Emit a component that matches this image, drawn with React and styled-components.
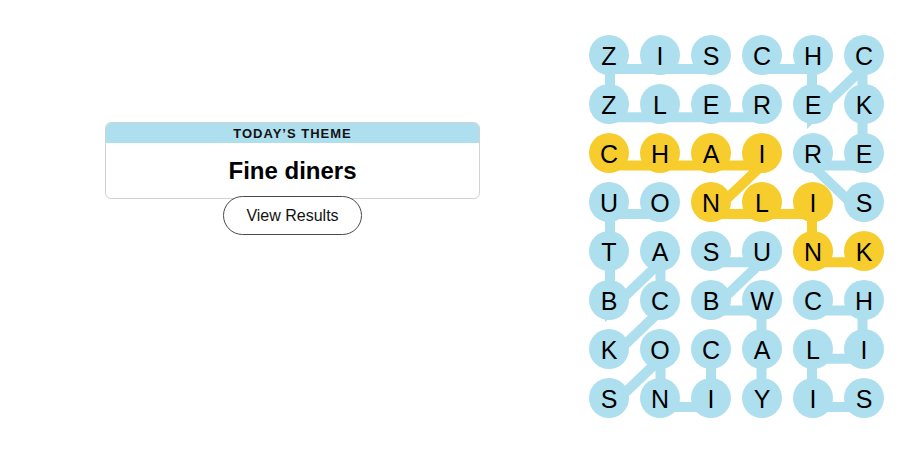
import React from "react";
import styled, { createGlobalStyle } from "styled-components";

const GlobalStyle = createGlobalStyle`
  html, body {
    margin: 0;
    padding: 0;
    background: #ffffff;
  }
  body {
    font-family: "Liberation Sans", Arial, sans-serif;
    color: #121212;
  }
`;

const letters = [
  "ZISCHC",
  "ZLEREK",
  "CHAIRE",
  "UONLIS",
  "TASUNK",
  "BCBWCH",
  "KOCALI",
  "SNIYIS",
];

// found words as [row, col] paths
const words = [
  { path: [[0, 2], [0, 1], [0, 0], [1, 0], [1, 1], [1, 2], [1, 3]] },
  { path: [[0, 3], [0, 4], [1, 4], [0, 5], [1, 5], [2, 5], [2, 4], [3, 5]] },
  { path: [[3, 1], [3, 0], [4, 0], [5, 0], [4, 1], [5, 1], [6, 0]] },
  { path: [[4, 2], [4, 3], [5, 2], [5, 3], [6, 3], [7, 3]] },
  { path: [[7, 0], [6, 1], [7, 1], [7, 2], [6, 2]] },
  { path: [[5, 4], [5, 5], [6, 5], [6, 4], [7, 4], [7, 5]] },
  {
    path: [[2, 0], [2, 1], [2, 2], [2, 3], [3, 2], [3, 3], [3, 4], [4, 4], [4, 5]],
    spangram: true,
  },
];

const BLUE = "#aedfee";
const YELLOW = "#f7cd2e";

const spanCells = new Set();
words
  .filter((w) => w.spangram)
  .forEach((w) => w.path.forEach(([r, c]) => spanCells.add(`${r}-${c}`)));

const Page = styled.div`
  display: flex;
  width: 905px;
  height: 450px;
`;

const InfoColumn = styled.div`
  width: 585px;
  display: flex;
  flex-direction: column;
  align-items: center;
  padding-top: 122px;
  box-sizing: border-box;
`;

const ThemeCard = styled.div`
  width: 375px;
  box-sizing: border-box;
  border: 1px solid #d3d3d3;
  border-radius: 6px;
  overflow: hidden;
  background: #fff;
`;

const ThemeHeader = styled.div`
  height: 20px;
  background: ${BLUE};
  text-align: center;
  font-size: 13px;
  font-weight: 700;
  line-height: 21px;
  letter-spacing: 1px;
  color: #121212;
`;

const ThemeBody = styled.div`
  height: 55px;
  text-align: center;
  font-size: 24px;
  font-weight: 700;
  line-height: 56px;
  color: #000;
`;

const ResultsButton = styled.button`
  margin-top: -3px;
  height: 39px;
  padding: 0 22px;
  box-sizing: border-box;
  border: 1px solid #4a4a4a;
  border-radius: 20px;
  background: #fff;
  font-family: "Liberation Sans", Arial, sans-serif;
  font-size: 16px;
  color: #121212;
  cursor: pointer;
`;

const BoardColumn = styled.div`
  flex: 1;
  padding: 35px 0 0 4px;
  box-sizing: border-box;
`;

const Board = styled.div`
  position: relative;
  width: 295px;
`;

const Lines = styled.svg`
  position: absolute;
  left: 0;
  top: 0;
  overflow: visible;
`;

const LetterGrid = styled.div`
  position: relative;
  display: grid;
  grid-template-columns: repeat(6, 40px);
  grid-auto-rows: 40px;
  column-gap: 11px;
  row-gap: 9px;
`;

const Letter = styled.div`
  width: 40px;
  height: 40px;
  border-radius: 50%;
  background: ${(p) => (p.$span ? YELLOW : BLUE)};
  display: flex;
  align-items: center;
  justify-content: center;
  font-size: 25px;
  line-height: 1;
  color: #000;
  padding-top: 2px;
  box-sizing: border-box;
`;

const lx = (c) => 21 + 50.5 * c;
const ly = (r) => 34 + 48.3 * r;

export default function App() {
  return (
    <>
      <GlobalStyle />
      <Page>
        <InfoColumn>
          <ThemeCard>
            <ThemeHeader>TODAY’S THEME</ThemeHeader>
            <ThemeBody>Fine diners</ThemeBody>
          </ThemeCard>
          <ResultsButton>View Results</ResultsButton>
        </InfoColumn>
        <BoardColumn>
          <Board>
            <Lines width="295" height="386">
              {words.map((w, i) => (
                <polyline
                  key={i}
                  points={w.path.map(([r, c]) => `${lx(c)},${ly(r)}`).join(" ")}
                  fill="none"
                  stroke={w.spangram ? YELLOW : BLUE}
                  strokeWidth="10"
                />
              ))}
            </Lines>
            <LetterGrid>
              {letters.map((row, r) =>
                row.split("").map((ch, c) => (
                  <Letter key={`${r}-${c}`} $span={spanCells.has(`${r}-${c}`)}>
                    {ch}
                  </Letter>
                ))
              )}
            </LetterGrid>
          </Board>
        </BoardColumn>
      </Page>
    </>
  );
}
